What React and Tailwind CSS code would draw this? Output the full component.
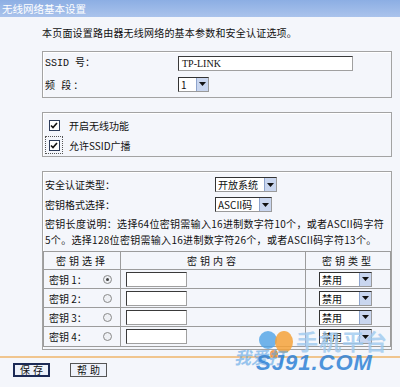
import React from 'react';

const KEYS = ['1', '2', '3', '4'];

function Arrow() {
  return (
    <span className="flex items-center justify-center w-[12px] h-full bg-[#c9d6ef] border-l border-[#8ea4cc]">
      <svg width="7" height="4" viewBox="0 0 7 4">
        <path d="M0 0h7L3.5 4z" fill="#111" />
      </svg>
    </span>
  );
}

function Select({ value, className }) {
  return (
    <div className={`flex items-stretch h-[15px] bg-white border border-t-[#333] border-l-[#333] border-r-[#9a9a9a] border-b-[#9a9a9a] ${className}`}>
      <span className="flex-1 pl-[2px] leading-[13px] text-[10px] whitespace-nowrap">{value}</span>
      <Arrow />
    </div>
  );
}

function TextBox({ value, className }) {
  return (
    <div className={`h-[15px] bg-white border border-t-[#3a3a3a] border-l-[#3a3a3a] border-r-[#a0a0a0] border-b-[#a0a0a0] pl-[3px] leading-[13px] text-[10px] font-['Liberation_Serif',serif] ${className}`}>
      {value}
    </div>
  );
}

function Check({ focused }) {
  return (
    <span className={`flex items-center justify-center w-[18px] h-[18px] ${focused ? 'border border-dotted border-[#555]' : ''}`}>
      <span className="flex items-center justify-center w-[11px] h-[11px] bg-white border border-[#2d3c5a]">
        <svg width="8" height="7" viewBox="0 0 8 7">
          <path d="M1 3.5l2 2L7 1" stroke="#111" strokeWidth="1.6" fill="none" />
        </svg>
      </span>
    </span>
  );
}

function Radio({ checked }) {
  return (
    <span className="flex items-center justify-center w-[9px] h-[9px] rounded-full border border-[#8a8a8a] bg-[#eef0f4]">
      {checked && <span className="w-[3px] h-[3px] rounded-full bg-[#444]" />}
    </span>
  );
}

function Box({ className, children }) {
  return (
    <div className={`w-[350px] border border-[#a3a3a3] shadow-[inset_1px_1px_0_#ffffff] ${className}`}>
      {children}
    </div>
  );
}

export default function App() {
  return (
    <div className="relative w-[400px] h-[387px] overflow-hidden bg-[#f4f6fb] text-[#111] font-['Noto_Sans_CJK_SC',sans-serif]">
      {/* title bar */}
      <div className="h-[17px] bg-gradient-to-b from-[#8caee3] to-[#aac3ec] text-white text-[10.5px] leading-[17px] pl-[2px]">
        无线网络基本设置
      </div>

      <div className="pl-[42px]">
        <p className="mt-[9px] text-[10px] leading-[14px] tracking-[0.2px]">
          本页面设置路由器无线网络的基本参数和安全认证选项。
        </p>

        {/* SSID / band */}
        <Box className="mt-[11px] pt-[1px] pb-[3px]">
          <div className="flex items-center h-[20px] pl-[2px] text-[10px]">
            <span className="w-[133px] font-['Liberation_Mono','Noto_Sans_CJK_SC',monospace]">SSID 号：</span>
            <TextBox value="TP-LINK" className="w-[175px]" />
          </div>
          <div className="flex items-center h-[20px] mt-[1px] pl-[2px] text-[10px]">
            <span className="w-[133px] tracking-[2px]">频 段：</span>
            <Select value="1" className="w-[31px]" />
          </div>
        </Box>

        {/* switches */}
        <Box className="mt-[14px] pt-[2px] pb-[1px]">
          <div className="flex items-center h-[20px] pl-[2px] gap-[6px] text-[10px]">
            <Check />
            <span>开启无线功能</span>
          </div>
          <div className="flex items-center h-[20px] pl-[2px] gap-[6px] text-[10px]">
            <Check focused />
            <span>允许SSID广播</span>
          </div>
        </Box>

        {/* security */}
        <Box className="mt-[14px] pt-[3px] pb-[2px]">
          <div className="flex items-center h-[19px] pl-[2px] text-[10px]">
            <span className="w-[170px]">安全认证类型：</span>
            <Select value="开放系统" className="w-[62px]" />
          </div>
          <div className="flex items-center h-[19px] mt-[1px] pl-[2px] text-[10px]">
            <span className="w-[170px]">密钥格式选择：</span>
            <Select value="ASCII码" className="w-[57px]" />
          </div>
          <p className="mt-[2px] pl-[2px] text-[10px] leading-[16px] whitespace-nowrap tracking-[0.3px]">
            密钥长度说明：选择64位密钥需输入16进制数字符10个，或者ASCII码字符
            <br />
            5个。选择128位密钥需输入16进制数字符26个，或者ASCII码字符13个。
          </p>

          <div className="mt-[3px] w-[348px] border border-[#9c9c9c] text-[10px]">
            <div className="grid grid-cols-[77px_185px_1fr] h-[18px] border-b border-[#9c9c9c] leading-[17px] tracking-[3px] text-center">
              <span className="border-r border-[#9c9c9c]">密钥选择</span>
              <span className="border-r border-[#9c9c9c]">密钥内容</span>
              <span>密钥类型</span>
            </div>
            {KEYS.map((k, i) => (
              <div
                key={k}
                className={`grid grid-cols-[77px_185px_1fr] h-[19px] ${i < 3 ? 'border-b border-[#9c9c9c]' : ''}`}
              >
                <div className="flex items-center pl-[5px] border-r border-[#9c9c9c]">
                  <span className="w-[54px]">密钥 {k}：</span>
                  <Radio checked={i === 0} />
                </div>
                <div className="flex items-center pl-[5px] border-r border-[#9c9c9c]">
                  <TextBox value="" className="w-[61px] h-[14px]" />
                </div>
                <div className="flex items-center pl-[13px]">
                  <Select value="禁用" className="w-[53px]" />
                </div>
              </div>
            ))}
          </div>
        </Box>
      </div>

      {/* footer */}
      <div className="mt-[6px] h-[2px] bg-[#f0c58e]" />
      <div className="flex items-center gap-[20px] pl-[13px] mt-[5px]">
        <button className="w-[37px] h-[14px] border-2 border-[#1c2a55] bg-[#eef2fa] text-[10px] leading-[10px] tracking-[3px] pl-[3px]">
          保存
        </button>
        <button className="w-[37px] h-[14px] border border-[#555] bg-[#eef2fa] text-[10px] leading-[12px] tracking-[3px] pl-[3px]">
          帮助
        </button>
      </div>

      {/* watermark */}
      <div className="absolute left-[234px] top-[324px] pointer-events-none select-none">
        <svg className="absolute left-[20px] top-[4px]" width="44" height="34" viewBox="0 0 44 34">
          <circle cx="14" cy="12" r="9" fill="#4fa3e6" opacity="0.8" />
          <ellipse cx="30" cy="14" rx="9" ry="11" fill="#f4a23a" opacity="0.85" />
          <circle cx="20" cy="26" r="4" fill="#f08a24" opacity="0.8" />
        </svg>
        <span className="absolute left-[0px] top-[20px] text-[17px] italic font-bold text-[#5aa4e4] opacity-60 whitespace-nowrap">我爱打</span>
        <span className="absolute left-[62px] top-[0px] text-[22px] font-bold text-[#9fcaef] opacity-80 whitespace-nowrap tracking-[1px]">手机平台</span>
        <span className="absolute left-[22px] top-[27px] text-[22px] leading-[24px] italic font-black text-[#2f82d6] opacity-85 whitespace-nowrap tracking-[1px] font-['Liberation_Sans',sans-serif]">SJ91.COM</span>
      </div>
    </div>
  );
}
